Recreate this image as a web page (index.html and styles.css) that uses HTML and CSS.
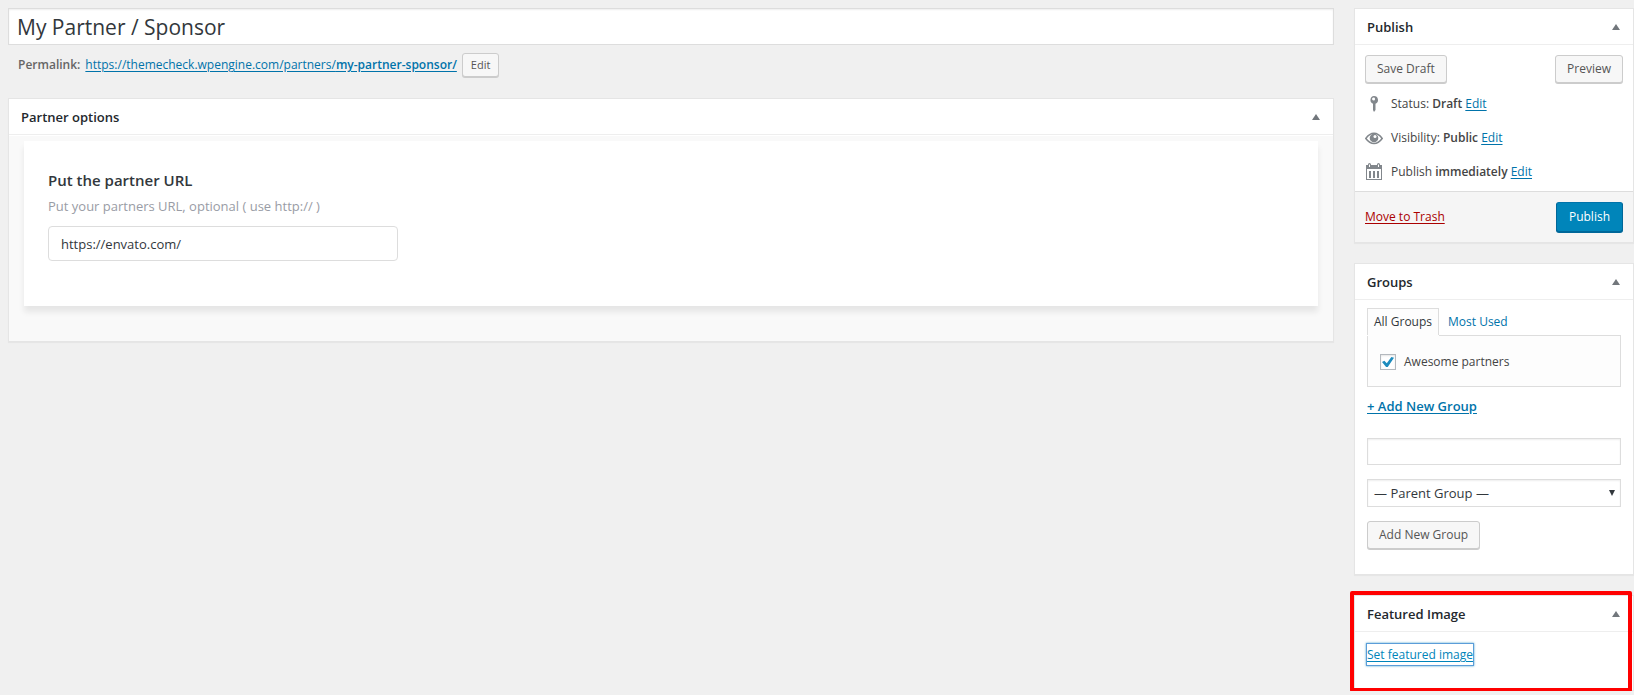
FILE: index.html
```html
<!DOCTYPE html>
<html lang="en">
<head>
<meta charset="utf-8">
<meta name="viewport" content="width=device-width, initial-scale=1">
<title>Edit Partner</title>
<link rel="stylesheet" href="styles.css">
</head>
<body>
<form class="editor">
  <main class="main">
    <input class="title-input" type="text" aria-label="Title" value="My Partner / Sponsor">
    <div class="permalink">
      <strong class="permalink-label">Permalink:</strong>
      <a class="link" href="#">https://themecheck.wpengine.com/partners/<b>my-partner-sponsor/</b></a>
      <button class="button button-small" type="button">Edit</button>
    </div>
    <section class="card options">
      <header class="card-header">
        <h2 class="card-title">Partner options</h2>
        <button class="toggle" type="button" aria-label="Toggle Partner options"></button>
      </header>
      <div class="options-body">
        <div class="field-panel">
          <label class="field-title" for="partner-url">Put the partner URL</label>
          <p class="field-help">Put your partners URL, optional ( use http:// )</p>
          <input class="field-input" id="partner-url" type="text" value="https://envato.com/">
        </div>
      </div>
    </section>
  </main>

  <aside class="side">
    <section class="card">
      <header class="card-header">
        <h2 class="card-title">Publish</h2>
        <button class="toggle" type="button" aria-label="Toggle Publish"></button>
      </header>
      <div class="publish-actions">
        <button class="button" type="button">Save Draft</button>
        <button class="button" type="button">Preview</button>
      </div>
      <ul class="publish-list">
        <li class="publish-row">
          <svg class="icon" viewBox="0 0 18 18" aria-hidden="true"><path fill="#82878c" fill-rule="evenodd" d="M9 1a4 4 0 0 1 1.500 7.700V15L9 17l-1-2V8.700A4 4 0 0 1 9 1zM8.500 2.500a1.500 1.500 0 1 0 .1 3 1.500 1.500 0 0 0-.1-3z"/></svg>
          <span>Status: <b>Draft</b> <a class="link" href="#">Edit</a></span>
        </li>
        <li class="publish-row">
          <svg class="icon" viewBox="0 0 18 18" aria-hidden="true"><path fill="none" stroke="#82878c" stroke-width="1.500" d="M.8 9.500Q4.500 4.300 9 4.300t8.200 5.200Q13.500 14.500 9 14.500T.8 9.500z"/><circle cx="9" cy="9" r="4.300" fill="#82878c"/><circle cx="10" cy="7.500" r="1.500" fill="#fff"/></svg>
          <span>Visibility: <b>Public</b> <a class="link" href="#">Edit</a></span>
        </li>
        <li class="publish-row">
          <svg class="icon" viewBox="0 0 18 18" aria-hidden="true"><path fill="#82878c" fill-rule="evenodd" d="M1 2h2V1.500a1.500 1.500 0 0 1 3 0V2h6V1.500a1.500 1.500 0 0 1 3 0V2h2v15H1zM4 1.500V4h1V1.500zM13 1.500V4h1V1.500zM2 6v10h14V6zM4 8h2v7H4zM8 8h2v7H8zM12 8h2v7h-2z"/></svg>
          <span>Publish <b>immediately</b> <a class="link" href="#">Edit</a></span>
        </li>
      </ul>
      <footer class="publish-footer">
        <a class="link link-danger" href="#">Move to Trash</a>
        <button class="button button-primary" type="button">Publish</button>
      </footer>
    </section>

    <section class="card">
      <header class="card-header">
        <h2 class="card-title">Groups</h2>
        <button class="toggle" type="button" aria-label="Toggle Groups"></button>
      </header>
      <div class="groups-body">
        <div class="tabs">
          <button class="tab tab-active" type="button">All Groups</button>
          <button class="tab" type="button">Most Used</button>
        </div>
        <div class="tab-panel">
          <label class="check"><input class="check-box" type="checkbox" checked> Awesome partners</label>
        </div>
        <a class="link add-link" href="#">+ Add New Group</a>
        <input class="group-name" type="text" aria-label="New group name">
        <div class="select-wrap">
          <select class="group-parent" aria-label="Parent group"><option>— Parent Group —</option></select>
        </div>
        <button class="button" type="button">Add New Group</button>
      </div>
    </section>

    <section class="card featured">
      <header class="card-header">
        <h2 class="card-title">Featured Image</h2>
        <button class="toggle" type="button" aria-label="Toggle Featured Image"></button>
      </header>
      <div class="featured-body">
        <a class="link link-focused" href="#">Set featured image</a>
      </div>
    </section>
  </aside>
</form>
</body>
</html>
```

FILE: styles.css
```css
*, *::before, *::after { box-sizing: border-box; }

body {
  margin: 0;
  background: #f0f0f0;
  color: #444;
  font: 12px/18px "Open Sans", "Noto Sans", sans-serif;
}

button, input, select { margin: 0; font: inherit; color: inherit; }
b, strong { font-weight: 600; }

.editor {
  display: grid;
  grid-template-columns: minmax(0, 1fr) 280px;
  gap: 20px;
  align-items: start;
  padding-top: 8px;
  padding-left: 8px;
}

.link { color: #0073aa; text-decoration: underline; text-underline-offset: 2px; }
.link-danger { color: #a00; }

.title-input {
  display: block;
  width: 100%;
  height: 37px;
  padding: 0 8px;
  border: 1px solid #ddd;
  background: #fff;
  box-shadow: inset 0 1px 2px rgba(0, 0, 0, .07);
  color: #32373c;
  font-size: 21px;
}

.permalink {
  display: flex;
  align-items: center;
  gap: 5px;
  padding: 8px 10px 0;
}
.permalink-label { color: #666; }

.button {
  height: 28px;
  padding: 0 11px;
  border: 1px solid #ccc;
  border-radius: 3px;
  background: #f7f7f7;
  box-shadow: 0 1px 0 #ccc;
  color: #555;
  white-space: nowrap;
}
.button-small { height: 24px; padding: 0 8px; font-size: 11px; }
.button-primary {
  height: 30px;
  padding: 0 12px;
  border-color: #0073aa #006799 #006799;
  background: #0085ba;
  box-shadow: 0 1px 0 #006799;
  color: #fff;
}

.card {
  border: 1px solid #e5e5e5;
  background: #fff;
  box-shadow: 0 1px 1px rgba(0, 0, 0, .04);
}
.card-header {
  display: flex;
  align-items: center;
  justify-content: space-between;
  height: 36px;
  padding: 0 12px;
  border-bottom: 1px solid #eee;
}
.card-title { margin: 0; color: #23282d; font-size: 13px; font-weight: 600; }
.toggle { display: flex; padding: 4px 1px; border: 0; background: none; }
.toggle::before {
  content: "";
  border: 4px solid transparent;
  border-top: 0;
  border-bottom: 6px solid #72777c;
}

.options { margin-top: 21px; }
.options-body {
  padding: 5px 15px 35px;
  border-top: 1px solid #fff;
  background: #f9f9f9;
}
.field-panel {
  display: flex;
  flex-direction: column;
  align-items: flex-start;
  padding: 29px 24px 45px;
  background: #fff;
  box-shadow: 0 6px 6px rgba(0, 0, 0, .08);
}
.field-title { color: #32373c; font-size: 15px; line-height: 20px; font-weight: 600; }
.field-help { margin: 7px 0 11px; color: #999ca5; font-size: 13px; }
.field-input {
  width: 350px;
  height: 35px;
  padding: 0 12px;
  border: 1px solid #ddd;
  border-radius: 4px;
  background: #fff;
  color: #32373c;
  font-size: 13px;
}

.side { display: grid; gap: 20px; }

.publish-actions { display: flex; justify-content: space-between; padding: 10px 10px 0; }
.publish-list { margin: 0; padding: 4px 10px 2px; list-style: none; }
.publish-row { display: flex; align-items: center; gap: 8px; height: 34px; }
.icon { width: 18px; height: 18px; }
.publish-footer {
  display: flex;
  align-items: center;
  justify-content: space-between;
  padding: 10px;
  border-top: 1px solid #ddd;
  background: #f5f5f5;
}

.groups-body {
  display: flex;
  flex-direction: column;
  align-items: flex-start;
  padding: 8px 12px 25px;
}
.tabs { display: flex; gap: 2px; }
.tab {
  height: 27px;
  padding: 0 6px 1px;
  border: 1px solid transparent;
  border-bottom: 0;
  background: none;
  color: #0073aa;
}
.tab-active { border-color: #ddd; background: #fdfdfd; color: #32373c; box-shadow: 0 1px 0 #fdfdfd; z-index: 1; }
.tab-panel {
  width: 100%;
  padding: 17px 12px 15px;
  border: 1px solid #ddd;
  background: #fdfdfd;
}
.check { display: flex; align-items: center; gap: 8px; }
.check-box {
  display: grid;
  width: 16px;
  height: 16px;
  appearance: none;
  border: 1px solid #b4b9be;
  background: #fff;
  box-shadow: inset 0 1px 2px rgba(0, 0, 0, .1);
}
.check-box:checked::before {
  content: "";
  margin: 2px 1px;
  background: #1e8cbe;
  clip-path: polygon(0 50%, 20% 38%, 40% 62%, 78% 0, 100% 8%, 48% 100%, 34% 100%);
}
.add-link { margin-top: 10px; font-size: 13px; font-weight: 600; }
.group-name, .group-parent {
  width: 100%;
  height: 27px;
  padding: 0 6px;
  border: 1px solid #ddd;
  border-radius: 0;
  background: #fff;
  box-shadow: inset 0 1px 2px rgba(0, 0, 0, .07);
  color: #32373c;
}
.group-name { margin-top: 23px; }
.select-wrap { position: relative; width: 100%; margin: 14px 0; }
.group-parent { display: block; height: 28px; appearance: none; font-size: 13px; }
.select-wrap::after {
  content: "";
  position: absolute;
  top: 11px;
  right: 6px;
  border: 3px solid transparent;
  border-top: 6px solid #32373c;
  border-bottom: 0;
  pointer-events: none;
}

.featured { position: relative; }
.featured::after {
  content: "";
  position: absolute;
  inset: -5px 1px -2px -5px;
  border: 4px solid #f00;
  border-radius: 2px;
  pointer-events: none;
}
.featured-body { padding: 14px 12px 26px; }
.link-focused {
  padding: 2px 0;
  color: #0085ba;
  box-shadow: 0 0 0 1px #5b9dd9, 0 0 2px 1px rgba(30, 140, 190, .8);
}
```
